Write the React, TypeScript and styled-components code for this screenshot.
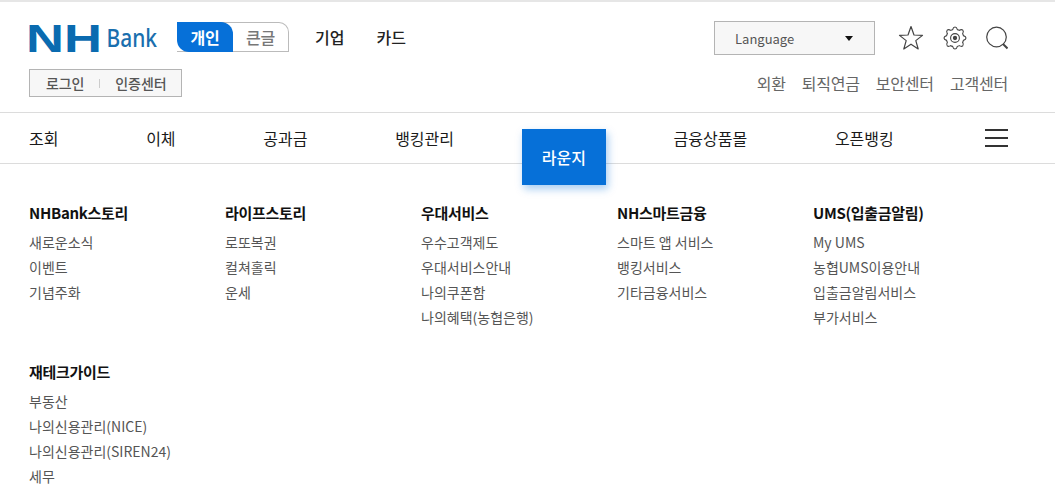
import styled, {createGlobalStyle} from "styled-components";

const Global = createGlobalStyle`
html, body {
    margin: 0;
    padding: 0;
    background: #fff;
    overflow: hidden;
}
body {
    font-family: "Noto Sans CJK KR", "Noto Sans", sans-serif;
    color: #222;
}
ul {
    list-style: none;
    margin: 0;
    padding: 0;
}
a {
    color: inherit;
    text-decoration: none;
}
`;

const Page = styled.div`
width: 1055px;
height: 504px;
overflow: hidden;
border-top: 2px solid #e6e6e6;
box-sizing: border-box;
`;

const Header = styled.header`
height: 111px;
padding: 19px 47px 0 29px;
box-sizing: border-box;
border-bottom: 1px solid #dcdcdc;
`;

const TopRow = styled.div`
display: flex;
align-items: center;
height: 34px;
`;

const LogoLink = styled.a`
display: block;
width: 148px;
height: 44px;
margin-left: -4px;
margin-right: 4px;
`;

const Switch = styled.div`
display: flex;
width: 112px;
height: 30px;
margin: 0 26px 2px 0;
box-sizing: border-box;
border: 1px solid #bbb;
border-left: none;
border-radius: 0 10px 0 0;
font-size: 16px;
letter-spacing: -0.3px;
`;

const SwitchItem = styled.a<{$on?: boolean}>`
display: flex;
align-items: center;
justify-content: center;
width: ${p => p.$on ? "56px" : "55px"};
margin: ${p => p.$on ? "-1px 0" : "0"};
background: ${p => p.$on ? "#0670d8" : "transparent"};
color: ${p => p.$on ? "#fff" : "#777"};
border-radius: ${p => p.$on ? "0 12px 0 12px" : "0"};
font-weight: ${p => p.$on ? 700 : 500};
`;

const Biz = styled.a`
font-size: 16px;
font-weight: 500;
color: #222;
margin: 0 32px 2px 0;
`;

const LangBox = styled.div`
display: flex;
align-items: center;
justify-content: space-between;
width: 161px;
height: 34px;
box-sizing: border-box;
margin-left: auto;
padding: 0 21px 0 20px;
background: #f7f7f7;
border: 1px solid #b4b4b4;
font-size: 13px;
color: #555;
`;

const Caret = styled.span`
width: 0;
height: 0;
border-left: 4px solid transparent;
border-right: 4px solid transparent;
border-top: 5px solid #111;
`;

const Icons = styled.div`
display: flex;
align-items: center;
gap: 19px;
margin-left: 23px;
`;

const BottomRow = styled.div`
display: flex;
align-items: center;
justify-content: space-between;
margin-top: 14px;
`;

const LoginBox = styled.div`
display: flex;
align-items: center;
width: 153px;
height: 28px;
box-sizing: border-box;
padding-left: 16px;
background: #f7f7f7;
border: 1px solid #b4b4b4;
font-size: 14px;
font-weight: 500;
letter-spacing: -0.1px;
color: #555;
`;

const LoginDivider = styled.i`
width: 1px;
height: 9px;
margin: 0 15px;
background: #ccc;
`;

const Utils = styled.ul`
display: flex;
gap: 16px;
font-size: 16px;
color: #666;
letter-spacing: -0.2px;
`;

const Nav = styled.nav`
display: flex;
align-items: center;
height: 51px;
padding: 0 47px 0 29px;
box-sizing: border-box;
border-bottom: 1px solid #dcdcdc;
`;

const NavList = styled.ul`
display: flex;
gap: 87.7px;
font-size: 16px;
line-height: 24px;
color: #1a1a1a;
`;

const NavItem = styled.li<{$on?: boolean}>`
position: relative;
color: ${p => p.$on ? "#fff" : "inherit"};
font-weight: ${p => p.$on ? 500 : 400};
z-index: 0;
top: ${p => p.$on ? "19px" : "0"};
&::before {
    content: ${p => p.$on ? '""' : "none"};
    position: absolute;
    z-index: -1;
    left: -20px;
    right: -20px;
    top: -16px;
    height: 56px;
    background: #0670d8;
    box-shadow: 2px 4px 8px rgba(6, 112, 216, 0.35);
}
`;

const Burger = styled.button`
display: flex;
flex-direction: column;
justify-content: space-between;
width: 23px;
height: 18px;
margin-left: auto;
padding: 0;
border: none;
background: transparent;
span {
    display: block;
    height: 2px;
    background: #333;
}
`;

const MenuGrid = styled.div`
display: grid;
grid-template-columns: repeat(5, 196px);
row-gap: 27px;
padding: 34px 0 0 29px;
`;

const GroupTitle = styled.h3`
margin: 0 0 2px;
font-size: 15px;
line-height: 30px;
font-weight: 700;
letter-spacing: -0.3px;
color: #111;
`;

const GroupLinks = styled.ul`
font-size: 14px;
line-height: 25px;
color: #555;
`;

function Logo() {
    return <svg width="148" height="44" viewBox="-4 0 148 44">
        <text x="-3" y="36" fontFamily="Liberation Sans" fontWeight="700" fontSize="39" textLength="76" lengthAdjust="spacingAndGlyphs" fill="#0a6bb0">NH</text>
        <text x="77.5" y="31" fontFamily="Noto Sans" fontWeight="500" fontSize="26" textLength="50.5" lengthAdjust="spacingAndGlyphs" fill="#1a6fae">Bank</text>
    </svg>;
}

function StarIcon() {
    return <svg width="26" height="26" viewBox="0 0 26 26" fill="none" stroke="#444" strokeWidth="1.2" strokeLinejoin="round">
        <path d="M13 1.5 L16 10 L24.5 10.4 L17.8 15.6 L20.2 24 L13 19.2 L5.8 24 L8.2 15.6 L1.5 10.4 L10 10 Z" />
    </svg>;
}

// eight teeth around a ring
function GearIcon() {
    const teeth = [0, 45, 90, 135, 180, 225, 270, 315];
    return <svg width="24" height="24" viewBox="0 0 24 24" fill="none" stroke="#444" strokeWidth="1.1">
        {teeth.map(t => <path key={t} d="M9.6 3.6 C10 2.2 10.6 1 12 1 C13.4 1 14 2.2 14.4 3.6 C15.2 3.8 16 4.2 16.7 4.6" transform={`rotate(${t} 12 12)`} />)}
        <circle cx="12" cy="12" r="4.4" />
        <circle cx="12" cy="12" r="1.6" fill="#444" />
    </svg>;
}

function SearchIcon() {
    return <svg width="22" height="24" viewBox="0 0 22 24" fill="none" stroke="#444">
        <circle cx="10.5" cy="11" r="9.8" strokeWidth="1.2" />
        <path d="M17 18 L21.5 22.5" strokeWidth="2" />
    </svg>;
}

const utils = ["외환", "퇴직연금", "보안센터", "고객센터"];
const navItems = ["조회", "이체", "공과금", "뱅킹관리", "라운지", "금융상품몰", "오픈뱅킹"];
const groups = [
    {title: "NHBank스토리", links: ["새로운소식", "이벤트", "기념주화"]},
    {title: "라이프스토리", links: ["로또복권", "컬쳐홀릭", "운세"]},
    {title: "우대서비스", links: ["우수고객제도", "우대서비스안내", "나의쿠폰함", "나의혜택(농협은행)"]},
    {title: "NH스마트금융", links: ["스마트 앱 서비스", "뱅킹서비스", "기타금융서비스"]},
    {title: "UMS(입출금알림)", links: ["My UMS", "농협UMS이용안내", "입출금알림서비스", "부가서비스"]},
    {title: "재테크가이드", links: ["부동산", "나의신용관리(NICE)", "나의신용관리(SIREN24)", "세무"]},
];

export default function App() {
    return <Page>
        <Global />
        <Header>
            <TopRow>
                <LogoLink><Logo /></LogoLink>
                <Switch>
                    <SwitchItem $on>개인</SwitchItem>
                    <SwitchItem>큰글</SwitchItem>
                </Switch>
                <Biz>기업</Biz>
                <Biz>카드</Biz>
                <LangBox>Language<Caret /></LangBox>
                <Icons>
                    <StarIcon />
                    <GearIcon />
                    <SearchIcon />
                </Icons>
            </TopRow>
            <BottomRow>
                <LoginBox>로그인<LoginDivider />인증센터</LoginBox>
                <Utils>{utils.map(u => <li key={u}>{u}</li>)}</Utils>
            </BottomRow>
        </Header>
        <Nav>
            <NavList>
                {navItems.map(n => <NavItem key={n} $on={n === "라운지"}>{n}</NavItem>)}
            </NavList>
            <Burger><span /><span /><span /></Burger>
        </Nav>
        <MenuGrid>
            {groups.map(g => <div key={g.title}>
                <GroupTitle>{g.title}</GroupTitle>
                <GroupLinks>{g.links.map(l => <li key={l}>{l}</li>)}</GroupLinks>
            </div>)}
        </MenuGrid>
    </Page>;
}
